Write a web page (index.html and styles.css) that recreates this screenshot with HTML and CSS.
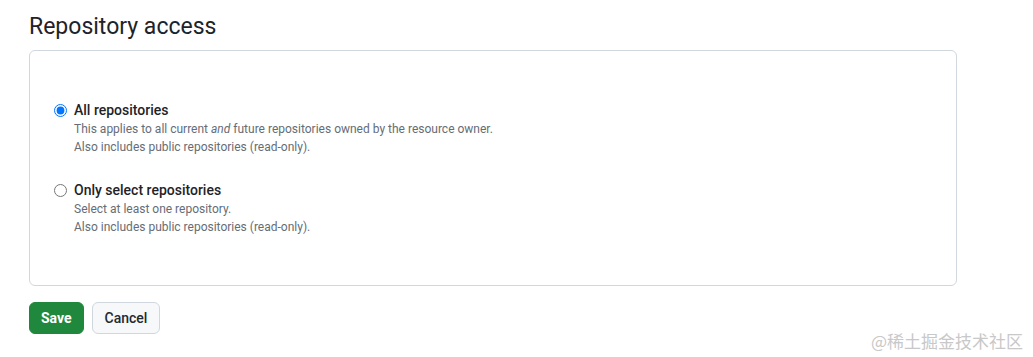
FILE: index.html
```html
<!DOCTYPE html>
<html lang="en">
<head>
    <meta charset="UTF-8">
    <meta name="viewport" content="width=device-width, initial-scale=1.0">
    <title>Repository access</title>
    <link rel="stylesheet" href="styles.css">
</head>
<body>

    <!-- Repository access -->
    <h2 class="subhead">Repository access</h2>

    <div class="access-box">
        <label class="option">
            <input type="radio" name="repos" checked>
            <span class="option-body">
                <span class="option-title">All repositories</span>
                <span class="option-note">This applies to all current <em>and</em> future repositories owned by the resource owner.</span>
                <span class="option-note">Also includes public repositories (read-only).</span>
            </span>
        </label>

        <label class="option">
            <input type="radio" name="repos">
            <span class="option-body">
                <span class="option-title">Only select repositories</span>
                <span class="option-note">Select at least one repository.</span>
                <span class="option-note">Also includes public repositories (read-only).</span>
            </span>
        </label>
    </div>

    <div class="actions">
        <button class="btn btn-primary">Save</button>
        <button class="btn">Cancel</button>
    </div>

    <!-- Watermark -->
    <div class="watermark">@稀土掘金技术社区</div>

</body>
</html>
```

FILE: styles.css
```css
body {
    margin: 0;
    padding: 0 76px 0 29px;
    font-family: Roboto, "Noto Sans", "Liberation Sans", sans-serif;
    color: #1f2328;
    background: #fff;
}
.subhead {
    font-size: 23px;
    font-weight: 400;
    line-height: 30px;
    margin: 12px 0 8px;
}
.access-box {
    border: 1px solid #d0d7de;
    border-radius: 6px;
    padding: 49px 24px 49px 24px;
    display: flex;
    flex-direction: column;
    gap: 24px;
}
.option {
    display: flex;
    align-items: flex-start;
}
.option input {
    width: 13px;
    height: 13px;
    margin: 4px 7px 0 0;
    accent-color: #0075ff;
}
.option-body {
    display: flex;
    flex-direction: column;
}
.option-title {
    font-size: 14px;
    font-weight: 500;
    line-height: 20px;
}
.option-note {
    font-size: 12px;
    line-height: 18px;
    color: #656d76;
}
.actions {
    display: flex;
    gap: 8px;
    margin-top: 16px;
}
.btn {
    font-family: inherit;
    font-size: 14px;
    font-weight: 500;
    height: 32px;
    padding: 0 11px;
    border: 1px solid #d0d7de;
    border-radius: 6px;
    background: #f6f8fa;
    color: #24292f;
}
.btn-primary {
    background: #1f883d;
    border-color: #1f883d;
    color: #fff;
    font-weight: 700;
}
.btn + .btn {
    padding: 0 12px;
}
.watermark {
    position: absolute;
    right: 10px;
    top: 329px;
    font-family: "Noto Sans CJK SC", sans-serif;
    font-size: 17px;
    line-height: 24px;
    color: #c8c8c8;
}
```
